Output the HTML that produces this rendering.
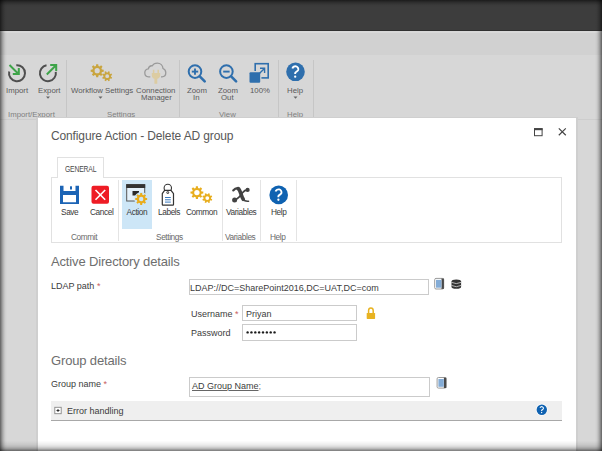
<!DOCTYPE html>
<html><head><meta charset="utf-8">
<style>
*{margin:0;padding:0;box-sizing:border-box}
html,body{width:602px;height:451px;overflow:hidden;background:#d7d7d7;font-family:"Liberation Sans",sans-serif}
.a{position:absolute}
.t{position:absolute;white-space:nowrap;line-height:1}
#top{left:0;top:0;width:602px;height:31px;background:#3d3d3d;border-bottom:1px solid #303030}
#band{left:0;top:31px;width:602px;height:24px;background:#d1d1d1;border-top:2px solid #d8d8d8}
#rib{left:0;top:55px;width:602px;height:63px;background:#d7d7d7}
.sep{position:absolute;width:1px;background:#c6c6c6}
.rl{font-size:7.8px;color:#5a5a5a}
.gl{font-size:7.8px;color:#808080}
#dlg{left:38px;top:118px;width:538px;height:333px;background:#fff}
.dt{font-size:12px;color:#585858;letter-spacing:-0.13px}
.dl{font-size:8.3px;color:#3a3a3a;letter-spacing:-0.4px}
.dg{font-size:8.3px;color:#6a6a6a;letter-spacing:-0.4px}
.dsep{position:absolute;width:1px;background:#e4e4e4}
.h{font-size:13px;color:#6e6e6e;letter-spacing:-0.15px}
.lab{font-size:9px;color:#3c3c3c}
.req{color:#c86060}
.inp{position:absolute;border:1px solid #cbcbcb;background:#fff}
</style></head><body>
<div class="a" id="top"></div>
<div class="a" id="band"></div>
<div class="a" id="rib"></div>

<!-- background ribbon -->
<div class="sep" style="left:66px;top:60px;height:58px"></div>
<div class="sep" style="left:179px;top:60px;height:58px"></div>
<div class="sep" style="left:278px;top:60px;height:58px"></div>
<div class="sep" style="left:313px;top:60px;height:58px"></div>

<div class="t rl" style="left:6px;top:87px">Import</div>
<div class="t rl" style="left:38px;top:87px">Export</div>
<div class="t rl" style="left:71px;top:87px">Workflow Settings</div>
<div class="t rl" style="left:136px;top:87px">Connection</div>
<div class="t rl" style="left:141px;top:94px">Manager</div>
<div class="t rl" style="left:187px;top:87px">Zoom</div>
<div class="t rl" style="left:193px;top:94px">In</div>
<div class="t rl" style="left:218px;top:87px">Zoom</div>
<div class="t rl" style="left:221px;top:94px">Out</div>
<div class="t rl" style="left:250px;top:87px">100%</div>
<div class="t rl" style="left:287px;top:87px">Help</div>
<div class="t gl" style="left:8px;top:110.5px">Import/Export</div>
<div class="t gl" style="left:107px;top:110.5px">Settings</div>
<div class="t gl" style="left:219px;top:110.5px">View</div>
<div class="t gl" style="left:287px;top:110.5px">Help</div>

<!-- dialog -->
<div class="a" style="left:0;top:119px;width:602px;height:1px;background:#cdcdcd"></div>
<div class="a" style="left:36px;top:117px;width:542px;height:334px;background:#cfcfcf"></div>
<div class="a" id="dlg"></div>
<div class="t dt" style="left:51px;top:130px">Configure Action - Delete AD group</div>

<!-- dialog ribbon -->
<div class="a" style="left:51px;top:177px;width:511px;height:66px;border:1px solid #e1e1e1;border-top-color:#e1e1e1"></div>
<div class="a" style="left:57px;top:157px;width:47px;height:21px;border:1px solid #e1e1e1;border-bottom:none;background:#fff"></div>
<div class="t" style="left:64.7px;top:166.2px;font-size:8.2px;color:#4a4a4a;letter-spacing:-0.2px;transform:scaleX(0.83);transform-origin:0 0">GENERAL</div>

<div class="a" style="left:122px;top:180px;width:30px;height:49px;background:#cde6f7"></div>
<div class="dsep" style="left:118px;top:180px;height:61px"></div>
<div class="dsep" style="left:222px;top:180px;height:61px"></div>
<div class="dsep" style="left:260px;top:180px;height:61px"></div>
<div class="dsep" style="left:296px;top:180px;height:61px"></div>

<div class="t dl" style="left:61px;top:208px">Save</div>
<div class="t dl" style="left:90px;top:208px">Cancel</div>
<div class="t dl" style="left:126.5px;top:208px">Action</div>
<div class="t dl" style="left:158px;top:208px">Labels</div>
<div class="t dl" style="left:186px;top:208px">Common</div>
<div class="t dl" style="left:226px;top:208px">Variables</div>
<div class="t dl" style="left:271px;top:208px">Help</div>
<div class="t dg" style="left:71px;top:233px">Commit</div>
<div class="t dg" style="left:156px;top:233px">Settings</div>
<div class="t dg" style="left:225px;top:233px">Variables</div>
<div class="t dg" style="left:270px;top:233px">Help</div>

<!-- form -->
<div class="t h" style="left:51px;top:255px">Active Directory details</div>
<div class="t lab" style="left:51px;top:282px">LDAP path <span class="req">*</span></div>
<div class="inp" style="left:189px;top:278.5px;width:240px;height:16px"></div>
<div class="t lab" style="left:190px;top:284px">LDAP://DC=SharePoint2016,DC=UAT,DC=com</div>
<div class="t lab" style="left:191px;top:310px">Username <span class="req">*</span></div>
<div class="t lab" style="left:191px;top:329px">Password</div>
<div class="inp" style="left:242px;top:305px;width:115px;height:16px"></div>
<div class="inp" style="left:242px;top:324px;width:115px;height:16.5px"></div>
<div class="t lab" style="left:246px;top:310px">Priyan</div>

<div class="t h" style="left:51px;top:354px">Group details</div>
<div class="t lab" style="left:51px;top:380px">Group name <span class="req">*</span></div>
<div class="inp" style="left:189px;top:377px;width:241px;height:20px"></div>
<div class="t lab" style="left:192px;top:382px"><span style="text-decoration:underline;text-decoration-color:#666">AD Group Name</span><span style="color:#777">;</span></div>

<div class="a" style="left:51px;top:401px;width:511px;height:20px;background:#efefef;border-bottom:1px solid #a8a8a8"></div>
<div class="t lab" style="left:67px;top:407px">Error handling</div>

<svg class="a" style="left:0;top:0" width="602" height="451" viewBox="0 0 602 451">
<path d="M16.30,65.23 A8,8 0 1,1 9.17,71.54" fill="none" stroke="#4f4f4f" stroke-width="2"/>
<path d="M9.5,65 L18.5,74 M12.8,74 L18.8,74 L18.8,68" fill="none" stroke="#3ea449" stroke-width="2"/>
<path d="M55.78,71.81 A8,8 0 1,1 46.51,65.32" fill="none" stroke="#4f4f4f" stroke-width="2"/>
<path d="M46.8,74.5 L56,65.2 M50.2,65 L56.2,65 L56.2,71" fill="none" stroke="#3ea449" stroke-width="2"/>
<path d="M46,96.6 L50,96.6 L48,98.8Z" fill="#666"/>
<path d="M98.5,96.6 L102.5,96.6 L100.5,98.8Z" fill="#666"/>
<path d="M293.5,96.6 L297.5,96.6 L295.5,98.8Z" fill="#666"/>
<path d="M103.72,69.67 L103.72,71.73 L101.95,71.92 L101.42,73.19 L102.54,74.58 L101.08,76.04 L99.69,74.92 L98.42,75.45 L98.23,77.22 L96.17,77.22 L95.98,75.45 L94.71,74.92 L93.32,76.04 L91.86,74.58 L92.98,73.19 L92.45,71.92 L90.68,71.73 L90.68,69.67 L92.45,69.48 L92.98,68.21 L91.86,66.82 L93.32,65.36 L94.71,66.48 L95.98,65.95 L96.17,64.18 L98.23,64.18 L98.42,65.95 L99.69,66.48 L101.08,65.36 L102.54,66.82 L101.42,68.21 L101.95,69.48Z M99.80,70.70 a2.6,2.6 0 1,0 -5.2,0 a2.6,2.6 0 1,0 5.2,0Z" fill="#c9a53f" fill-rule="evenodd"/>
<path d="M112.16,77.38 L111.56,78.85 L110.24,78.47 L109.49,79.23 L109.88,80.54 L108.40,81.16 L107.75,79.96 L106.67,79.96 L106.02,81.16 L104.55,80.56 L104.93,79.24 L104.17,78.49 L102.86,78.88 L102.24,77.40 L103.44,76.75 L103.44,75.67 L102.24,75.02 L102.84,73.55 L104.16,73.93 L104.91,73.17 L104.52,71.86 L106.00,71.24 L106.65,72.44 L107.73,72.44 L108.38,71.24 L109.85,71.84 L109.47,73.16 L110.23,73.91 L111.54,73.52 L112.16,75.00 L110.96,75.65 L110.96,76.73Z M109.10,76.20 a1.9,1.9 0 1,0 -3.8,0 a1.9,1.9 0 1,0 3.8,0Z" fill="#c9a53f" fill-rule="evenodd"/>
<path d="M150.3,76.8 L148.5,76.8 C146,76.8 144.8,74.8 144.8,72.8 C144.8,70.5 146.5,69 148.3,68.8 C148.8,66.8 150.5,65.5 152.3,65.8 C153.3,64 155.3,63.1 157.3,63.1 C160.5,63.1 162.8,65.5 163,68.5 C164.8,69.2 165.8,71 165.8,72.8 C165.8,75 164.3,76.8 162,76.8 L161,76.8" fill="none" stroke="#9a9a9a" stroke-width="1.3"/>
<path d="M153.6,69.8 L153.6,73.5 M158.2,69.8 L158.2,73.5" stroke="#dccca2" stroke-width="1.5"/>
<path d="M151.8,73 L160.2,73 L160.2,75.5 C160.2,77.5 158.5,78.5 157.3,78.8 L157.3,83.8 L154.4,83.8 L154.4,78.8 C153.2,78.5 151.8,77.5 151.8,75.5Z" fill="#dccca2"/>
<circle cx="195" cy="71.6" r="6.3" fill="none" stroke="#2f6fad" stroke-width="2"/>
<path d="M200,76.6 L204.7,81.3" stroke="#2f6fad" stroke-width="2.6" stroke-linecap="round"/>
<path d="M191.8,71.6 L198.2,71.6" stroke="#2f6fad" stroke-width="1.9"/>
<path d="M195,68.4 L195,74.8" stroke="#2f6fad" stroke-width="1.9"/>
<circle cx="226.4" cy="71.6" r="6.3" fill="none" stroke="#2f6fad" stroke-width="2"/>
<path d="M231.4,76.6 L236.1,81.3" stroke="#2f6fad" stroke-width="2.6" stroke-linecap="round"/>
<path d="M223.20000000000002,71.6 L229.6,71.6" stroke="#2f6fad" stroke-width="1.9"/>
<rect x="255.2" y="63.7" width="13" height="14.2" fill="none" stroke="#2f6fad" stroke-width="1.6"/>
<rect x="248.3" y="71.1" width="13.1" height="12.8" rx="1.5" fill="#d7d7d7"/>
<rect x="249.5" y="72.3" width="10.7" height="10.4" rx="1" fill="#2f6fad"/>
<path d="M257.6,75.3 L264.2,68.7 M260,68.3 L264.6,68.3 L264.6,72.9" fill="none" stroke="#2f6fad" stroke-width="1.4"/>
<circle cx="295.5" cy="71.8" r="9.3" fill="#2f6fad"/><path d="M292.40,68.47 A3.00,3.00 0 1,1 298.20,70.03 C297.70,71.50 295.20,72.00 295.20,73.00 L295.20,74.10" fill="none" stroke="#fff" stroke-width="1.90"/><circle cx="295.20" cy="76.65" r="1.15" fill="#fff"/>
<rect x="534.5" y="128.7" width="7.6" height="7" fill="none" stroke="#444" stroke-width="1"/>
<rect x="534" y="128.2" width="8.6" height="2" fill="#444"/>
<path d="M558.8,128.4 L565.8,135.2 M565.8,128.4 L558.8,135.2" stroke="#444" stroke-width="1.2"/>
<path d="M60,185.8 L79,185.8 L79,204 L60,204Z M63.5,185.8 L63.5,191 L75.5,191 L75.5,185.8Z M63,195 L76,195 L76,202.2 L63,202.2Z" fill="#1c64b5" fill-rule="evenodd"/>
<rect x="70" y="186.3" width="2" height="3.2" fill="#1c64b5"/>
<rect x="91.5" y="185.8" width="17.5" height="18" rx="2" fill="#ee1c25"/>
<path d="M95.5,190 L105.2,199.7 M105.2,190 L95.5,199.7" stroke="#fff" stroke-width="1.6"/>
<rect x="126.7" y="184.7" width="18" height="16.3" fill="#e4f1fb" stroke="#555" stroke-width="1"/>
<rect x="126.2" y="184.2" width="19" height="3.8" fill="#333"/>
<path d="M132.5,191 L139,191 L139,193.5 L136.5,195.5 L132.5,195.5Z" fill="#2a2a2a"/>
<circle cx="141.2" cy="199" r="6.9" fill="#cde6f7"/>
<path d="M147.13,198.06 L147.13,199.94 L145.56,200.12 L145.07,201.29 L146.05,202.53 L144.73,203.85 L143.49,202.87 L142.32,203.36 L142.14,204.93 L140.26,204.93 L140.08,203.36 L138.91,202.87 L137.67,203.85 L136.35,202.53 L137.33,201.29 L136.84,200.12 L135.27,199.94 L135.27,198.06 L136.84,197.88 L137.33,196.71 L136.35,195.47 L137.67,194.15 L138.91,195.13 L140.08,194.64 L140.26,193.07 L142.14,193.07 L142.32,194.64 L143.49,195.13 L144.73,194.15 L146.05,195.47 L145.07,196.71 L145.56,197.88Z M143.40,199.00 a2.2,2.2 0 1,0 -4.4,0 a2.2,2.2 0 1,0 4.4,0Z" fill="#e9ac1c" fill-rule="evenodd"/>
<circle cx="167.8" cy="188" r="3.7" fill="none" stroke="#333" stroke-width="1.1"/>
<path d="M164.6,190.3 L171,190.3 L173.5,193.6 L173.5,204.6 Q173.5,205.2 172.9,205.2 L162.9,205.2 Q162.3,205.2 162.3,204.6 L162.3,193.6Z" fill="#fff" stroke="#333" stroke-width="1.2" stroke-linejoin="round"/>
<circle cx="167.8" cy="192.6" r="1.4" fill="#444"/><circle cx="167.8" cy="192.6" r="0.5" fill="#fff"/>
<path d="M165,197.5 L170.8,197.5 M165,199.8 L170.8,199.8 M165,202.1 L170.8,202.1" stroke="#3b7bbf" stroke-width="1"/>
<path d="M203.32,191.58 L203.32,193.62 L201.55,193.79 L201.03,195.04 L202.16,196.42 L200.72,197.86 L199.34,196.73 L198.09,197.25 L197.92,199.02 L195.88,199.02 L195.71,197.25 L194.46,196.73 L193.08,197.86 L191.64,196.42 L192.77,195.04 L192.25,193.79 L190.48,193.62 L190.48,191.58 L192.25,191.41 L192.77,190.16 L191.64,188.78 L193.08,187.34 L194.46,188.47 L195.71,187.95 L195.88,186.18 L197.92,186.18 L198.09,187.95 L199.34,188.47 L200.72,187.34 L202.16,188.78 L201.03,190.16 L201.55,191.41Z M199.60,192.60 a2.7,2.7 0 1,0 -5.4,0 a2.7,2.7 0 1,0 5.4,0Z" fill="#e8ae1f" fill-rule="evenodd"/>
<path d="M212.26,199.28 L211.66,200.75 L210.34,200.37 L209.59,201.13 L209.98,202.44 L208.50,203.06 L207.85,201.86 L206.77,201.86 L206.12,203.06 L204.65,202.46 L205.03,201.14 L204.27,200.39 L202.96,200.78 L202.34,199.30 L203.54,198.65 L203.54,197.57 L202.34,196.92 L202.94,195.45 L204.26,195.83 L205.01,195.07 L204.62,193.76 L206.10,193.14 L206.75,194.34 L207.83,194.34 L208.48,193.14 L209.95,193.74 L209.57,195.06 L210.33,195.81 L211.64,195.42 L212.26,196.90 L211.06,197.55 L211.06,198.63Z M209.20,198.10 a1.9,1.9 0 1,0 -3.8,0 a1.9,1.9 0 1,0 3.8,0Z" fill="#e8ae1f" fill-rule="evenodd"/>
<path d="M233.2,190.5 Q235.3,187.9 238.2,188.2" fill="none" stroke="#424242" stroke-width="2.1" stroke-linecap="round"/>
<path d="M238.2,188.6 C240.5,190 241.2,196.5 243.2,199.2" fill="none" stroke="#424242" stroke-width="3.7" stroke-linecap="round"/>
<path d="M243,199 Q245,201.8 248.5,201.2" fill="none" stroke="#424242" stroke-width="1.6" stroke-linecap="round"/>
<path d="M235.5,199.3 C238.5,199 240.5,195.5 242.5,192.8 C244,190.8 245.5,189.6 247.5,189.8" fill="none" stroke="#424242" stroke-width="1.7"/>
<circle cx="234.6" cy="200.1" r="2.5" fill="#424242"/><circle cx="247.6" cy="189.9" r="2.1" fill="#424242"/>
<circle cx="278.7" cy="194.9" r="9.3" fill="#0f62b1"/><path d="M275.60,191.57 A3.00,3.00 0 1,1 281.40,193.13 C280.90,194.60 278.40,195.10 278.40,196.10 L278.40,197.20" fill="none" stroke="#fff" stroke-width="1.90"/><circle cx="278.40" cy="199.75" r="1.15" fill="#fff"/>
<rect x="434.7" y="278.4" width="9" height="10.6" rx="1.3" fill="#fff" stroke="#9a9a9a" stroke-width="1"/>
<rect x="441.5" y="278.5" width="2.4" height="10.4" fill="#4a4a4a"/>
<rect x="436.0" y="279.9" width="5.4" height="7.8" fill="#84acd6"/>
<rect x="437.1" y="377.5" width="9" height="10.6" rx="1.3" fill="#fff" stroke="#9a9a9a" stroke-width="1"/>
<rect x="443.90000000000003" y="377.6" width="2.4" height="10.4" fill="#4a4a4a"/>
<rect x="438.40000000000003" y="379" width="5.4" height="7.8" fill="#84acd6"/>
<rect x="451.5" y="279.4" width="9.6" height="9.4" rx="4.8" ry="2.1" fill="#333"/>
<path d="M451.3,282.3 Q456.3,284.9 461.3,282.3 M451.3,285.4 Q456.3,288 461.3,285.4" fill="none" stroke="#c4c4c4" stroke-width="0.9"/>
<path d="M368.6,313 L368.6,310.5 C368.6,307 373.2,307 373.2,310.5 L373.2,313" fill="none" stroke="#e8b322" stroke-width="1.5"/>
<rect x="366.7" y="312.9" width="8.4" height="6" rx="0.6" fill="#e8b322"/>
<rect x="54.8" y="407.3" width="6.4" height="6.4" fill="#fff" stroke="#888" stroke-width="0.9"/>
<path d="M56.5,410.5 L59.5,410.5 M58,409 L58,412" stroke="#222" stroke-width="0.9"/>
<circle cx="541.8" cy="409.8" r="6" fill="#fff" fill-opacity="0.8"/>
<circle cx="541.8" cy="409.8" r="5.2" fill="#0f62b1"/><path d="M540.07,407.94 A1.68,1.68 0 1,1 543.31,408.81 C543.03,409.63 541.63,409.91 541.63,410.47 L541.63,411.09" fill="none" stroke="#fff" stroke-width="1.06"/><circle cx="541.63" cy="412.51" r="0.64" fill="#fff"/>
<circle cx="247.60" cy="332.4" r="1.2" fill="#1a1a1a"/>
<circle cx="251.45" cy="332.4" r="1.2" fill="#1a1a1a"/>
<circle cx="255.30" cy="332.4" r="1.2" fill="#1a1a1a"/>
<circle cx="259.15" cy="332.4" r="1.2" fill="#1a1a1a"/>
<circle cx="263.00" cy="332.4" r="1.2" fill="#1a1a1a"/>
<circle cx="266.85" cy="332.4" r="1.2" fill="#1a1a1a"/>
<circle cx="270.70" cy="332.4" r="1.2" fill="#1a1a1a"/>
<circle cx="274.55" cy="332.4" r="1.2" fill="#1a1a1a"/>
</svg>
<div class="a" style="left:0;top:0;width:602px;height:451px;background:linear-gradient(to right,rgba(0,0,0,0.49) 0.5px,rgba(0,0,0,0.37) 1.5px,rgba(0,0,0,0.25) 2.5px,rgba(0,0,0,0.16) 3.5px,rgba(0,0,0,0.09) 4.5px,rgba(0,0,0,0.04) 5.5px,rgba(0,0,0,0.015) 6.5px,rgba(0,0,0,0) 7.5px),linear-gradient(to left,rgba(0,0,0,0.49) 0.5px,rgba(0,0,0,0.37) 1.5px,rgba(0,0,0,0.25) 2.5px,rgba(0,0,0,0.16) 3.5px,rgba(0,0,0,0.09) 4.5px,rgba(0,0,0,0.04) 5.5px,rgba(0,0,0,0.015) 6.5px,rgba(0,0,0,0) 7.5px),linear-gradient(to bottom,rgba(0,0,0,0.49) 0.5px,rgba(0,0,0,0.37) 1.5px,rgba(0,0,0,0.25) 2.5px,rgba(0,0,0,0.16) 3.5px,rgba(0,0,0,0.09) 4.5px,rgba(0,0,0,0.04) 5.5px,rgba(0,0,0,0.015) 6.5px,rgba(0,0,0,0) 7.5px),linear-gradient(to top,rgba(0,0,0,0.48) 0.5px,rgba(0,0,0,0.38) 1.5px,rgba(0,0,0,0.27) 2.5px,rgba(0,0,0,0.2) 3.5px,rgba(0,0,0,0.14) 4.5px,rgba(0,0,0,0.1) 5.5px,rgba(0,0,0,0.07) 6.5px,rgba(0,0,0,0.05) 7.5px,rgba(0,0,0,0.03) 8.5px,rgba(0,0,0,0.015) 9.5px,rgba(0,0,0,0) 10.5px)"></div>
</body></html>
